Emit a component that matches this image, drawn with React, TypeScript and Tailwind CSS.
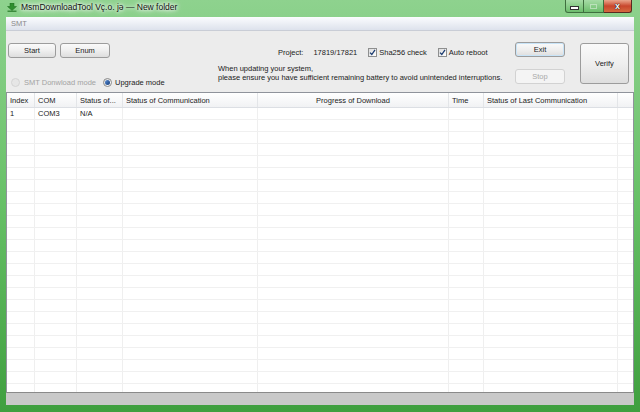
import React from 'react';

const cols = [
  { label: 'Index', w: 'w-[28px]', align: 'text-left' },
  { label: 'COM', w: 'w-[42px]', align: 'text-left' },
  { label: 'Status of...', w: 'w-[46px]', align: 'text-left' },
  { label: 'Status of Communication', w: 'w-[135px]', align: 'text-left' },
  { label: 'Progress of Download', w: 'w-[191px]', align: 'text-center' },
  { label: 'Time', w: 'w-[35px]', align: 'text-left' },
  { label: 'Status of Last Communication', w: 'w-[134px]', align: 'text-left' },
];

const rows: string[][] = [['1', 'COM3', 'N/A', '', '', '', '']];
for (let i = 0; i < 23; i++) rows.push(['', '', '', '', '', '', '']);

const Button: React.FC<{ children: React.ReactNode; className?: string }> = ({ children, className = '' }) => (
  <div
    className={`flex items-center justify-center rounded-[3px] border border-[#9c9c9c] bg-gradient-to-b from-[#fafafa] via-[#efefef] to-[#dedede] ${className}`}
  >
    {children}
  </div>
);

const Checkbox = () => (
  <div className="w-[9px] h-[9px] border border-[#8e8f8f] bg-gradient-to-br from-[#dcdcdc] to-[#ffffff] flex items-center justify-center">
    <svg width="7" height="7" viewBox="0 0 7 7">
      <path d="M1 3.6 L2.8 5.5 L6 0.8" fill="none" stroke="#1c3d72" strokeWidth="1.3" />
    </svg>
  </div>
);

const Radio: React.FC<{ checked?: boolean; disabled?: boolean }> = ({ checked, disabled }) => (
  <div
    className={`w-[9px] h-[9px] rounded-full border flex items-center justify-center ${
      disabled ? 'border-[#d4d4d4] bg-[#e6e6e6]' : 'border-[#8a8a8a] bg-gradient-to-br from-[#dcdcdc] to-white'
    }`}
  >
    {checked && <div className="w-[5px] h-[5px] rounded-full bg-gradient-to-br from-[#5a8ed4] to-[#163e7c]" />}
  </div>
);

export default function App() {
  return (
    <div className="w-[640px] h-[412px] overflow-hidden font-['Liberation_Sans',Arial,sans-serif] text-[7.5px] leading-[9px] text-[#1b1b1b]">
      <div className="w-full h-full flex flex-col bg-gradient-to-b from-[#8ed28e] via-[#66c066] to-[#3f9f3f]">
        {/* title bar */}
        <div className="h-[17px] flex items-start shrink-0">
          <div className="flex items-center h-[14px] pl-[7px] gap-[4px]">
            <svg width="10" height="9" viewBox="0 0 10 9">
              <path d="M3 0 H7 V3.5 H9.5 L5 7.5 L0.5 3.5 H3 Z" fill="#2f8f2f" stroke="#1d6b1d" strokeWidth="0.5" />
              <rect x="0.5" y="7.6" width="9" height="1.2" fill="#2a7a2a" />
            </svg>
            <span className="text-[8.5px] text-[#111] [text-shadow:0_0_5px_#ffffff,0_0_8px_#ffffff,0_0_3px_#ffffff]">
              MsmDownloadTool Vç.o. jə — New folder
            </span>
          </div>
          <div className="ml-auto mr-[8px] flex h-[13px]">
            <div className="w-[19px] h-full border border-[#3f6f3f] border-t-0 rounded-bl-[3px] bg-gradient-to-b from-[#a6dca6] to-[#6cbd6c] flex items-center justify-center pt-[3px]">
              <div className="w-[7px] h-[2px] bg-white border border-[#333] box-content" />
            </div>
            <div className="w-[20px] h-full border border-[#3f6f3f] border-t-0 border-l-0 bg-gradient-to-b from-[#a6dca6] to-[#6cbd6c] flex items-center justify-center">
              <div className="w-[7px] h-[5px] border border-[#d8ecd8] opacity-60" />
            </div>
            <div className="w-[28px] h-full border border-[#5a2a20] border-t-0 border-l-0 rounded-br-[3px] bg-gradient-to-b from-[#e9a58c] via-[#c8452c] to-[#d4693f] flex items-center justify-center">
              <span className="text-white font-bold text-[9px] leading-[9px] [text-shadow:0_0_1px_#000,0_0_1px_#000]">x</span>
            </div>
          </div>
        </div>

        {/* client area */}
        <div className="flex-1 mx-[6px] mb-[7px] flex flex-col bg-[#ececec]">
          {/* SMT strip */}
          <div className="h-[14px] shrink-0 flex items-center pl-[5px] bg-gradient-to-b from-[#fbfcfe] to-[#dde2ec] border-b border-[#c9cdd6] text-[#8a8a8a]">
            SMT
          </div>

          {/* controls */}
          <div className="h-[61px] shrink-0 flex">
            <div className="w-[212px] flex flex-col pl-[2px]">
              <div className="flex gap-[4px] mt-[12px]">
                <Button className="w-[48px] h-[15px]">Start</Button>
                <Button className="w-[50px] h-[15px]">Enum</Button>
              </div>
              <div className="flex items-center mt-[20px] pl-[3px]">
                <Radio disabled />
                <span className="ml-[4px] text-[#a3a3a3]">SMT Donwload mode</span>
                <div className="ml-[7px]">
                  <Radio checked />
                </div>
                <span className="ml-[3px]">Upgrade mode</span>
              </div>
            </div>

            <div className="w-[297px] flex flex-col">
              <div className="flex items-center mt-[16px] pl-[60px] h-[10px]">
                <span>Project:</span>
                <span className="ml-[10px]">17819/17821</span>
                <div className="ml-[11px]">
                  <Checkbox />
                </div>
                <span className="ml-[2px]">Sha256 check</span>
                <div className="ml-[11px]">
                  <Checkbox />
                </div>
                <span className="ml-[2px]">Auto reboot</span>
              </div>
              <div className="mt-[7px]">
                <div>When updating your system,</div>
                <div>please ensure you have sufficient remaining battery to avoid unintended interruptions.</div>
              </div>
            </div>

            <div className="w-[51px] flex flex-col">
              <Button className="w-[50px] h-[15px] mt-[11px] border-[#3c7fb1] shadow-[inset_0_0_0_1px_#c8e4f8]">
                Exit
              </Button>
              <div className="w-[50px] h-[15px] mt-[12px] rounded-[3px] border border-[#d2d2d2] bg-[#f4f4f4] text-[#a9a9a9] flex items-center justify-center">
                Stop
              </div>
            </div>

            <div className="ml-[14px]">
              <Button className="w-[49px] h-[41px] mt-[12px]">Verify</Button>
            </div>
          </div>

          {/* table */}
          <div className="h-[301px] shrink-0 bg-white border border-[#8f939b] border-b-[#8a8a8a] overflow-hidden flex flex-col">
            <div className="h-[15px] shrink-0 flex bg-gradient-to-b from-white to-[#f1f2f4] border-b border-[#dcdfe4]">
              {cols.map((c) => (
                <div
                  key={c.label}
                  className={`${c.w} ${c.align} shrink-0 h-full flex items-center border-r border-[#e3e5e8] ${
                    c.align === 'text-center' ? 'justify-center' : 'pl-[3px]'
                  }`}
                >
                  {c.label}
                </div>
              ))}
              <div className="flex-1" />
            </div>
            {rows.map((r, i) => (
              <div key={i} className="h-[12px] shrink-0 flex border-b border-[#f0f0f0]">
                {cols.map((c, j) => (
                  <div key={j} className={`${c.w} shrink-0 h-full flex items-center pl-[3px] border-r border-[#efefef]`}>
                    {r[j]}
                  </div>
                ))}
                <div className="flex-1" />
              </div>
            ))}
          </div>

          {/* status bar */}
          <div className="flex-1 bg-[#c9c9c9]" />
        </div>
      </div>
    </div>
  );
}
